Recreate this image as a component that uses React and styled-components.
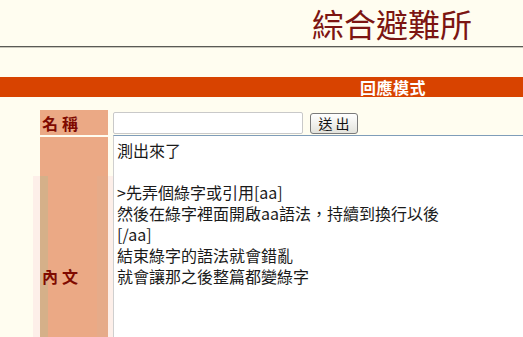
import React from 'react'
import styled, { createGlobalStyle } from 'styled-components'

const GlobalStyle = createGlobalStyle`
html, body {
    margin: 0;
    padding: 0;
    overflow: hidden;
    background: #fffdf0;
}
body {
    font-family: "Noto Sans CJK TC", "Liberation Sans", sans-serif;
}
`

const CJK = `"Noto Sans CJK TC", "Liberation Sans", sans-serif`

const Header = styled.header`
height: 46px;
display: flex;
justify-content: flex-end;
align-items: flex-start;
padding-right: 51px;
`

const Title = styled.h1`
margin: 0;
font-family: ${CJK};
font-weight: 400;
font-size: 32px;
line-height: normal;
color: #7c1512;
`

const Rule = styled.div`
height: 1px;
background: #5a5a55;
border-bottom: 1px solid #c9c7bb;
`

const ModeBar = styled.div`
margin-top: 29px;
height: 20px;
background: #d84300;
display: flex;
align-items: center;
padding-left: 360px;
color: #fff;
font-weight: 700;
font-size: 16px;
line-height: 20px;
letter-spacing: 0.5px;
`

const Form = styled.form`
margin-top: 13px;
margin-left: 33px;
padding-left: 7px;
display: grid;
grid-template-columns: 68px 1fr;
column-gap: 5px;
row-gap: 2px;
background: linear-gradient(#fdefe9, #fdefe9) 0 66px / 80px 100% no-repeat;
`

const Label = styled.div`
height: ${p => p.$h}px;
display: flex;
align-items: center;
padding-left: 2px;
box-sizing: border-box;
color: #7f0a00;
font-weight: 700;
font-size: 16px;
letter-spacing: 4px;
background: ${p => p.$striped
        ? 'linear-gradient(to right, #d5b089 8px, #eba985 8px, #eba985 57px, #e6ab89 57px) 0 39px / 100% 100% no-repeat, #eba985'
        : '#eba985'};
`

const Field = styled.div`
display: flex;
align-items: center;
gap: 7px;
height: 25px;
`

const NameInput = styled.input`
width: 190px;
height: 22px;
box-sizing: border-box;
border: 1px solid #c9c9c9;
border-radius: 2px;
background: #fff;
margin: 0;
`

const SendButton = styled.button`
width: 48px;
height: 21px;
margin-top: 2px;
border: 1px solid #7a7a7a;
border-radius: 3px;
background: linear-gradient(#ffffff, #e3e3dc);
font-family: ${CJK};
font-size: 14px;
line-height: 17px;
letter-spacing: 3px;
padding: 0 0 0 3px;
color: #111;
`

const Body = styled.textarea`
width: 430px;
height: 290px;
margin: -2px 0 0 0;
box-sizing: border-box;
border: 1px solid #cfcfcf;
border-top-color: #7f9db9;
background: #fff;
padding: 4px 3px;
resize: none;
font-family: ${CJK};
font-size: 16px;
line-height: 21px;
color: #1a1a1a;
outline: none;
`

const content = `測出來了

>先弄個綠字或引用[aa]
然後在綠字裡面開啟aa語法，持續到換行以後
[/aa]
結束綠字的語法就會錯亂
就會讓那之後整篇都變綠字`

const App = () => {
    return (
        <>
            <GlobalStyle />
            <Header>
                <Title>綜合避難所</Title>
            </Header>
            <Rule />
            <ModeBar>回應模式</ModeBar>
            <Form onSubmit={e => e.preventDefault()}>
                <Label $h={25}>名稱</Label>
                <Field>
                    <NameInput type='text' />
                    <SendButton type='submit'>送出</SendButton>
                </Field>
                <Label $h={278} $striped>內文</Label>
                <Body defaultValue={content} />
            </Form>
        </>
    )
}

export default App
